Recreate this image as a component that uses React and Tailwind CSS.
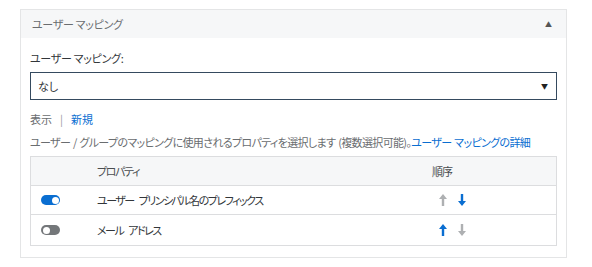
const font = { fontFamily: '"Noto Sans CJK JP", "Noto Sans", sans-serif' };

function Toggle({ on }) {
  return (
    <span
      className={`relative inline-block w-[19px] h-[10px] rounded-full ${on ? 'bg-[#0a6ed1]' : 'bg-[#74777a]'}`}
    >
      <span
        className={`absolute top-[1.5px] w-[7px] h-[7px] rounded-full bg-white ${on ? 'right-[1.5px]' : 'left-[1.5px]'}`}
      />
    </span>
  );
}

function Arrow({ up, active }) {
  return (
    <svg width="8" height="12" viewBox="0 0 8 12" className={active ? 'text-[#0a6ed1]' : 'text-[#aeb0b2]'}>
      {up ? (
        <path d="M4 0 L8 5 L5.2 5 L5.2 12 L2.8 12 L2.8 5 L0 5 Z" fill="currentColor" />
      ) : (
        <path d="M4 12 L8 7 L5.2 7 L5.2 0 L2.8 0 L2.8 7 L0 7 Z" fill="currentColor" />
      )}
    </svg>
  );
}

export default function App() {
  const rows = [
    { on: true, name: 'ユーザー プリンシパル名のプレフィックス', up: false, down: true },
    { on: false, name: 'メール アドレス', up: true, down: false },
  ];
  return (
    <div className="w-[592px] h-[267px] bg-white pt-[9px] pl-[20px] [font-feature-settings:'palt']" style={font}>
      <div className="w-[547px] border border-[#e4e5e6] text-[11px] text-[#32363a]">
        <div className="h-[28px] bg-[#f6f7f8] flex items-center justify-between pl-[11px] pr-[14px]">
          <span className="text-[#6a6d70] tracking-[-0.3px]">ユーザー マッピング</span>
          <span className="text-[7px] text-[#555]">▲</span>
        </div>
        <div className="px-[9px] pt-[13px] pb-[11px]">
          <div className="leading-[14px] tracking-[-0.3px]">ユーザー マッピング:</div>
          <div className="mt-[7px] h-[28px] border border-[#354a5f] flex items-center justify-between pl-[7px] pr-[8px]">
            <span>なし</span>
            <span className="text-[7px] text-[#222]">▼</span>
          </div>
          <div className="mt-[12px] leading-[14px] flex items-center text-[#6a6d70]">
            <span>表示</span>
            <span className="mx-[8px] text-[#999]">|</span>
            <span className="text-[#0a6ed1]">新規</span>
          </div>
          <div className="mt-[9px] leading-[14px] text-[#6a6d70] tracking-[-0.65px] [word-spacing:1px] whitespace-nowrap">
            ユーザー / グループのマッピングに使用されるプロパティを選択します (複数選択可能)。
            <span className="text-[#0a6ed1]">ユーザー マッピングの詳細</span>
          </div>
          <div className="mt-[7px] border border-[#dcdddf]">
            <div className="h-[29px] bg-[#f6f7f8] flex items-center border-b border-[#dcdddf]">
              <div className="w-[66px]" />
              <div className="flex-1 text-[#4a4d50] tracking-[-1.4px]">プロパティ</div>
              <div className="w-[124px] text-[#4a4d50] tracking-[-1px]">順序</div>
            </div>
            {rows.map((r, i) => (
              <div
                key={i}
                className={`flex items-center ${i === 0 ? 'h-[29px] border-b border-[#dcdddf]' : 'h-[30px]'}`}
              >
                <div className="w-[66px] pl-[10px] flex items-center">
                  <Toggle on={r.on} />
                </div>
                <div className="flex-1 tracking-[-1.5px] [word-spacing:4px]">{r.name}</div>
                <div className="w-[124px] flex items-center gap-[11px] pl-[7px]">
                  <Arrow up active={r.up} />
                  <Arrow active={r.down} />
                </div>
              </div>
            ))}
          </div>
        </div>
      </div>
    </div>
  );
}
